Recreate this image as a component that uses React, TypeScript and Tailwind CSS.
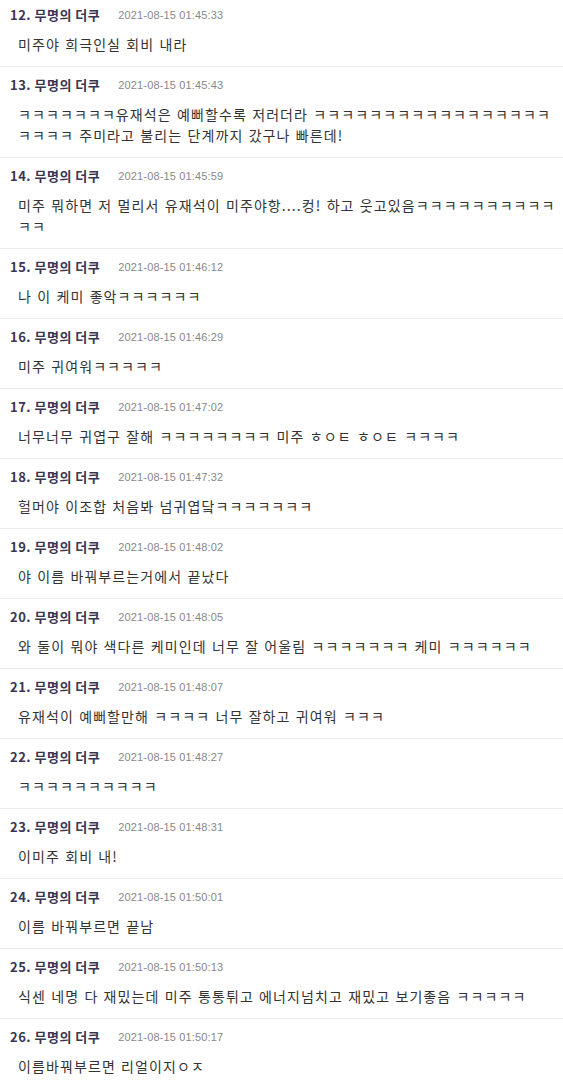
const comments: { no: number; time: string; lines: string[] }[] = [
  { no: 12, time: "01:45:33", lines: ["미주야 희극인실 회비 내라"] },
  {
    no: 13,
    time: "01:45:43",
    lines: [
      "ㅋㅋㅋㅋㅋㅋㅋ유재석은 예뻐할수록 저러더라 ㅋㅋㅋㅋㅋㅋㅋㅋㅋㅋㅋㅋㅋㅋㅋㅋㅋ",
      "ㅋㅋㅋㅋ 주미라고 불리는 단계까지 갔구나 빠른데!",
    ],
  },
  {
    no: 14,
    time: "01:45:59",
    lines: ["미주 뭐하면 저 멀리서 유재석이 미주야항....컹! 하고 웃고있음ㅋㅋㅋㅋㅋㅋㅋㅋㅋㅋ", "ㅋㅋ"],
  },
  { no: 15, time: "01:46:12", lines: ["나 이 케미 좋악ㅋㅋㅋㅋㅋㅋ"] },
  { no: 16, time: "01:46:29", lines: ["미주 귀여워ㅋㅋㅋㅋㅋ"] },
  { no: 17, time: "01:47:02", lines: ["너무너무 귀엽구 잘해 ㅋㅋㅋㅋㅋㅋㅋㅋ 미주 ㅎㅇㅌ ㅎㅇㅌ ㅋㅋㅋㅋ"] },
  { no: 18, time: "01:47:32", lines: ["헐머야 이조합 처음봐 넘귀엽닼ㅋㅋㅋㅋㅋㅋㅋ"] },
  { no: 19, time: "01:48:02", lines: ["야 이름 바꿔부르는거에서 끝났다"] },
  { no: 20, time: "01:48:05", lines: ["와 둘이 뭐야 색다른 케미인데 너무 잘 어울림 ㅋㅋㅋㅋㅋㅋㅋ 케미 ㅋㅋㅋㅋㅋㅋ"] },
  { no: 21, time: "01:48:07", lines: ["유재석이 예뻐할만해 ㅋㅋㅋㅋ 너무 잘하고 귀여워 ㅋㅋㅋ"] },
  { no: 22, time: "01:48:27", lines: ["ㅋㅋㅋㅋㅋㅋㅋㅋㅋㅋ"] },
  { no: 23, time: "01:48:31", lines: ["이미주 회비 내!"] },
  { no: 24, time: "01:50:01", lines: ["이름 바꿔부르면 끝남"] },
  { no: 25, time: "01:50:13", lines: ["식센 네명 다 재밌는데 미주 통통튀고 에너지넘치고 재밌고 보기좋음 ㅋㅋㅋㅋㅋ"] },
  { no: 26, time: "01:50:17", lines: ["이름바꿔부르면 리얼이지ㅇㅈ"] },
];

const Comment = ({ no, time, lines }: { no: number; time: string; lines: string[] }) => (
  <li className="border-b border-[#ebebeb] pt-[9px] pb-[11px] pl-[10px]">
    <div className="flex items-center h-[18px] leading-[18px]">
      <span className="text-[13px] font-bold tracking-[0.5px] text-[#3a3552] font-['Noto_Sans_CJK_KR',sans-serif]">
        {no}. 무명의 더쿠
      </span>
      <span className="ml-[18px] text-[11px] tracking-[0.15px] text-[#888] font-['Liberation_Sans',sans-serif]">
        2021-08-15 {time}
      </span>
    </div>
    <div className="mt-[10px] pl-[8px] text-[14px] leading-[21px] tracking-[1.1px] text-[#333] [word-spacing:1px] font-['Noto_Sans_CJK_KR',sans-serif]">
      {lines.map((line, i) => (
        <div key={i} className="whitespace-nowrap">
          {line}
        </div>
      ))}
    </div>
  </li>
);

export default function App() {
  return (
    <div className="w-[563px] h-[1085px] overflow-hidden bg-white">
      <ul className="-mt-[3px]">
        {comments.map((c) => (
          <Comment key={c.no} {...c} />
        ))}
      </ul>
    </div>
  );
}
